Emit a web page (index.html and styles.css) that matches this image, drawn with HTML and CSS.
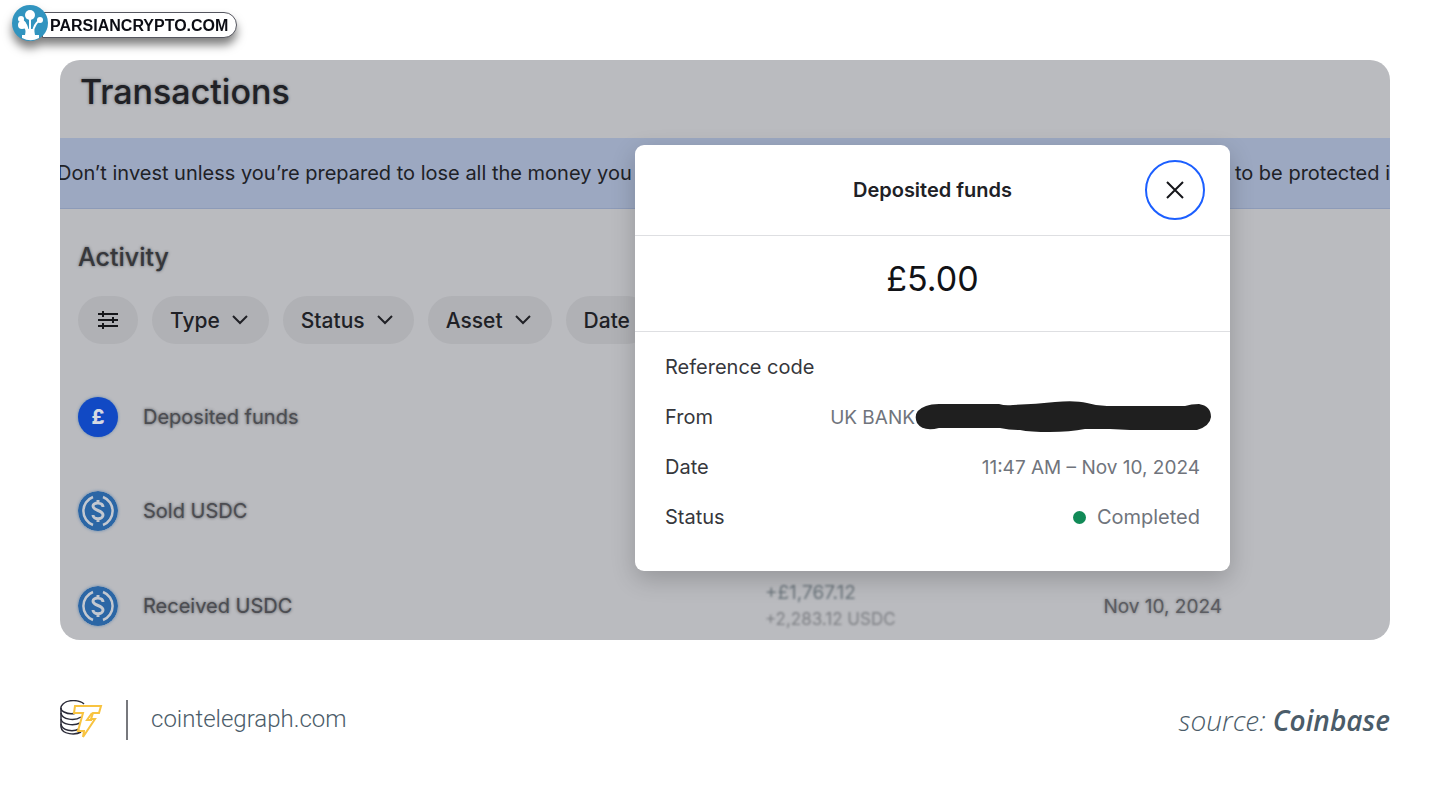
FILE: index.html
```
<!DOCTYPE html>
<html lang="en">
<head>
  <meta charset="UTF-8" />
  <meta name="viewport" content="width=device-width, initial-scale=1.0"/>
  <title>Transactions</title>
  <link rel="stylesheet" href="styles.css">
</head>
<body>
  <a class="site-badge" href="#">
    <svg class="badge-logo" viewBox="0 0 36 36" aria-hidden="true">
      <circle cx="18" cy="18" r="18" fill="#3194bf"/>
      <g fill="none" stroke="#fff" stroke-width="2">
        <path d="M18 13v14M10 15q5 4 6 12M11 21q3 1 4 6M28 15q-6 4-7 12"/>
      </g>
      <g fill="#fff">
        <path d="M14 24h8l1 6h4v3a18 18 0 0 1-17 0v-3h3z"/>
        <circle cx="18" cy="10" r="5"/>
        <circle cx="9" cy="14" r="3"/>
        <circle cx="28" cy="15" r="3"/>
        <circle cx="10" cy="20" r="4"/>
      </g>
    </svg>
    <span>PARSIANCRYPTO.COM</span>
  </a>

  <main class="screen">
    <h1>Transactions</h1>
    <div class="banner">
      <span>Don’t invest unless you’re prepared to lose all the money you</span>
      <span>to be protected i</span>
    </div>

    <section class="activity">
      <h2>Activity</h2>
      <div class="filters">
        <button class="filter filter-icon" type="button" aria-label="Filters">
          <svg width="22" height="18" viewBox="0 0 22 18">
            <path d="M1 3h20M1 9h20M1 15h20"/>
            <path d="M6 0v6M16 6v6M6 12v6"/>
          </svg>
        </button>
        <button class="filter" type="button">Type
          <svg width="16" height="10" viewBox="0 0 16 10"><path d="M1 1l7 7 7-7"/></svg>
        </button>
        <button class="filter" type="button">Status
          <svg width="16" height="10" viewBox="0 0 16 10"><path d="M1 1l7 7 7-7"/></svg>
        </button>
        <button class="filter" type="button">Asset
          <svg width="16" height="10" viewBox="0 0 16 10"><path d="M1 1l7 7 7-7"/></svg>
        </button>
        <button class="filter" type="button">Date</button>
      </div>
    </section>

    <table class="transactions">
      <tr>
        <td>
          <div class="asset">
            <span class="coin coin-gbp">£</span>
            <span class="asset-name">Deposited funds</span>
          </div>
        </td>
        <td></td>
        <td></td>
      </tr>
      <tr>
        <td>
          <div class="asset">
            <svg class="coin" viewBox="0 0 40 40" aria-hidden="true">
              <circle cx="20" cy="20" r="20" fill="#2b66a5"/>
              <g fill="none" stroke="#c3c8d0" stroke-width="2.500">
                <path d="M15 6a15 15 0 0 0 0 28M25 6a15 15 0 0 1 0 28"/>
                <path stroke-width="3" d="M25 16c0-5-10-5-10-1 0 5 10 4 10 9 0 5-10 5-10 0M20 9v4M20 27v4"/>
              </g>
            </svg>
            <span class="asset-name">Sold USDC</span>
          </div>
        </td>
        <td></td>
        <td></td>
      </tr>
      <tr>
        <td>
          <div class="asset">
            <svg class="coin" viewBox="0 0 40 40" aria-hidden="true">
              <circle cx="20" cy="20" r="20" fill="#2b66a5"/>
              <g fill="none" stroke="#c3c8d0" stroke-width="2.500">
                <path d="M15 6a15 15 0 0 0 0 28M25 6a15 15 0 0 1 0 28"/>
                <path stroke-width="3" d="M25 16c0-5-10-5-10-1 0 5 10 4 10 9 0 5-10 5-10 0M20 9v4M20 27v4"/>
              </g>
            </svg>
            <span class="asset-name">Received USDC</span>
          </div>
        </td>
        <td class="amount">
          <div>+£1,767.12</div>
          <div class="amount-coin">+2,283.12 USDC</div>
        </td>
        <td class="day">Nov 10, 2024</td>
      </tr>
    </table>

    <!-- Deposit details -->
    <div class="modal" role="dialog" aria-labelledby="modal-title">
      <div class="modal-header">
        <h3 id="modal-title">Deposited funds</h3>
        <button class="close" type="button" aria-label="Close">
          <svg width="18" height="18" viewBox="0 0 18 18" fill="none" stroke="#15161a" stroke-width="2">
            <path d="M1 1l16 16M17 1L1 17"/>
          </svg>
        </button>
      </div>
      <p class="total">£5.00</p>
      <dl class="details">
        <div class="detail">
          <dt>Reference code</dt>
          <dd></dd>
        </div>
        <div class="detail">
          <dt>From</dt>
          <dd class="bank">UK BANK
            <svg width="296" height="32" viewBox="0 0 296 32" aria-hidden="true">
              <path fill="#1f1f1f" d="M11 5Q16 3 24 3H84Q90 5 98 4Q120 3 140 1Q160-1 172 2Q182 5 192 5H270Q276 3 284 3Q296 5 296 16Q295 25 282 29H215L195 28H170Q155 31 135 31Q115 31 105 29Q95 29 85 27H24Q8 31 2 22Q-3 10 11 5z"/>
            </svg>
          </dd>
        </div>
        <div class="detail">
          <dt>Date</dt>
          <dd>11:47 AM – Nov 10, 2024</dd>
        </div>
        <div class="detail">
          <dt>Status</dt>
          <dd class="status">Completed</dd>
        </div>
      </dl>
    </div>
  </main>

  <footer class="footer">
    <a class="brand" href="#">
      <svg width="43" height="40" viewBox="0 0 43 40" fill="none" aria-hidden="true">
        <g stroke="#2b2b38" stroke-width="1.500">
          <path d="M24 4C20 0 8-1 3 4 0 7 0 10 4 12c4 2 9 2 12 1"/>
          <path d="M1 8v19c1 8 15 8 20 5"/>
          <path d="M1 13c1 7 14 8 20 4M1 19c1 6 13 7 19 4M1 24c1 7 12 8 18 5"/>
        </g>
        <path stroke="#f8c340" stroke-width="2" d="M15 6h26l-2 7h-6l-2 6h4L23 37l1-6h-6l5-18h-9z"/>
        <path stroke="#f8c340" stroke-width="2" d="M32 13l-5 7h5"/>
      </svg>
      <span>cointelegraph.com</span>
    </a>
    <p class="source">source: <strong>Coinbase</strong></p>
  </footer>
</body>
</html>
```
FILE: styles.css
```
* {
  margin: 0;
  padding: 0;
  box-sizing: border-box;
}
body {
  font-family: Inter, sans-serif;
  font-size: 20px;
  color: #202126;
  background: #fff;
  padding: 60px;
}
a {
  color: inherit;
  text-decoration: none;
}
button {
  font: inherit;
  color: inherit;
  border: none;
  cursor: pointer;
}
/* Badge in the page corner */
.site-badge {
  position: absolute;
  top: 5px;
  left: 12px;
  display: flex;
  align-items: center;
  font: bold 16px "Liberation Sans", Arial, sans-serif;
  color: #0c0d14;
  filter: drop-shadow(0 7px 5px rgba(0, 0, 0, 0.5));
}
.badge-logo {
  width: 36px;
  height: 36px;
  z-index: 1;
}
.site-badge span {
  height: 26px;
  line-height: 25px;
  margin: 4px 0 0 -6px;
  padding: 0 8px 0 7px;
  background: #fff;
  border: 1px solid #55565f;
  border-radius: 0 13px 13px 0;
}
/* App screen */
.screen {
  position: relative;
  overflow: hidden;
  border-radius: 20px;
  background: #babbbf;
}
h1 {
  padding: 12px 20px 26px;
  font-size: 34px;
  line-height: 40px;
  font-weight: 500;
  text-shadow: 0 0 3px rgba(32, 33, 38, 0.5);
}
.banner {
  display: flex;
  justify-content: space-between;
  height: 71px;
  line-height: 70px;
  margin-left: -3px;
  background: #9ca8c1;
  border-bottom: 1px solid #8d9bb8;
  white-space: nowrap;
}
.activity {
  padding: 34px 18px 26px;
}
h2 {
  font-size: 25px;
  line-height: 28px;
  font-weight: 500;
  color: #36373b;
  text-shadow: 0 0 3px rgba(32, 33, 38, 0.6);
}
.filters {
  display: flex;
  gap: 14px;
  margin-top: 25px;
}
.filter {
  display: flex;
  align-items: center;
  gap: 12px;
  height: 48px;
  padding: 0 21px 0 18px;
  border-radius: 24px;
  background: #b0b1b5;
  font-size: 21px;
  font-weight: 500;
}
.filter path {
  fill: none;
  stroke: #202126;
  stroke-width: 2;
}
.filter-icon {
  width: 60px;
  padding: 0;
  justify-content: center;
}
.filter-icon path {
  stroke: #15161a;
}
/* Transactions list */
.transactions {
  width: 100%;
  table-layout: fixed;
  border-collapse: collapse;
}
.transactions td {
  height: 94px;
  vertical-align: middle;
}
.transactions td:first-child {
  width: 53%;
  padding-left: 18px;
}
.transactions tr:last-child td {
  height: 82px;
  padding-top: 14px;
}
.asset {
  display: flex;
  align-items: center;
  gap: 25px;
}
.coin {
  flex: none;
  width: 40px;
  height: 40px;
  border-radius: 50%;
  box-shadow: 0 0 3px rgba(43, 102, 165, 0.6);
}
.coin-gbp {
  background: #1149c4;
  color: #d5d9e2;
  font-size: 20px;
  font-weight: 800;
  line-height: 40px;
  text-align: center;
}
.asset-name {
  color: #4c4d52;
  text-shadow: 0 0 3px rgba(32, 33, 38, 0.7);
}
.amount,
.day {
  line-height: 27px;
}
.amount div {
  font-size: 19px;
  color: #6b757c;
  filter: blur(1px);
}
.amount .amount-coin {
  font-size: 17px;
  color: #7d7f84;
}
.day {
  padding-right: 168px;
  font-size: 19px;
  text-align: right;
  color: #5c5d62;
  text-shadow: 0 0 3px rgba(32, 33, 38, 0.5);
}
/* Modal */
.modal {
  position: absolute;
  top: 85px;
  right: 160px;
  width: 595px;
  background: #fff;
  border-radius: 9px;
  box-shadow: 0 8px 24px rgba(0, 0, 0, 0.2);
}
.modal-header {
  display: grid;
  grid-template-columns: 60px 1fr 60px;
  align-items: center;
  padding: 15px 25px;
  border-bottom: 1px solid #dedfe2;
}
h3 {
  grid-column: 2;
  font-size: 20px;
  font-weight: 600;
  text-align: center;
}
.close {
  display: flex;
  align-items: center;
  justify-content: center;
  width: 60px;
  height: 60px;
  border: 2px solid #1c5fff;
  border-radius: 50%;
  background: #fff;
}
.total {
  padding: 23px 0 32px;
  border-bottom: 1px solid #dedfe2;
  font-size: 34px;
  line-height: 40px;
  text-align: center;
  color: #111216;
}
.details {
  padding: 10px 30px 29px;
}
.detail {
  display: flex;
  justify-content: space-between;
  align-items: center;
  height: 50px;
}
dt {
  color: #36373c;
}
dd {
  display: flex;
  align-items: center;
  font-size: 19px;
  color: #70747c;
}
.bank {
  margin-right: -11px;
}
.status {
  font-size: 20px;
}
.status::before {
  content: "";
  width: 13px;
  height: 13px;
  margin-right: 11px;
  border-radius: 50%;
  background: #118a57;
}
/* Footer */
.footer {
  display: flex;
  justify-content: space-between;
  align-items: center;
  margin-top: 60px;
  color: #4b5c69;
}
.brand {
  display: flex;
  gap: 23px;
  font: 300 24px/38px Roboto, sans-serif;
}
.brand span {
  padding-left: 23px;
  border-left: 2px solid #77787d;
}
.source {
  font: italic 300 28px/40px "Open Sans", sans-serif;
}
.source strong {
  font-weight: 600;
}
```
